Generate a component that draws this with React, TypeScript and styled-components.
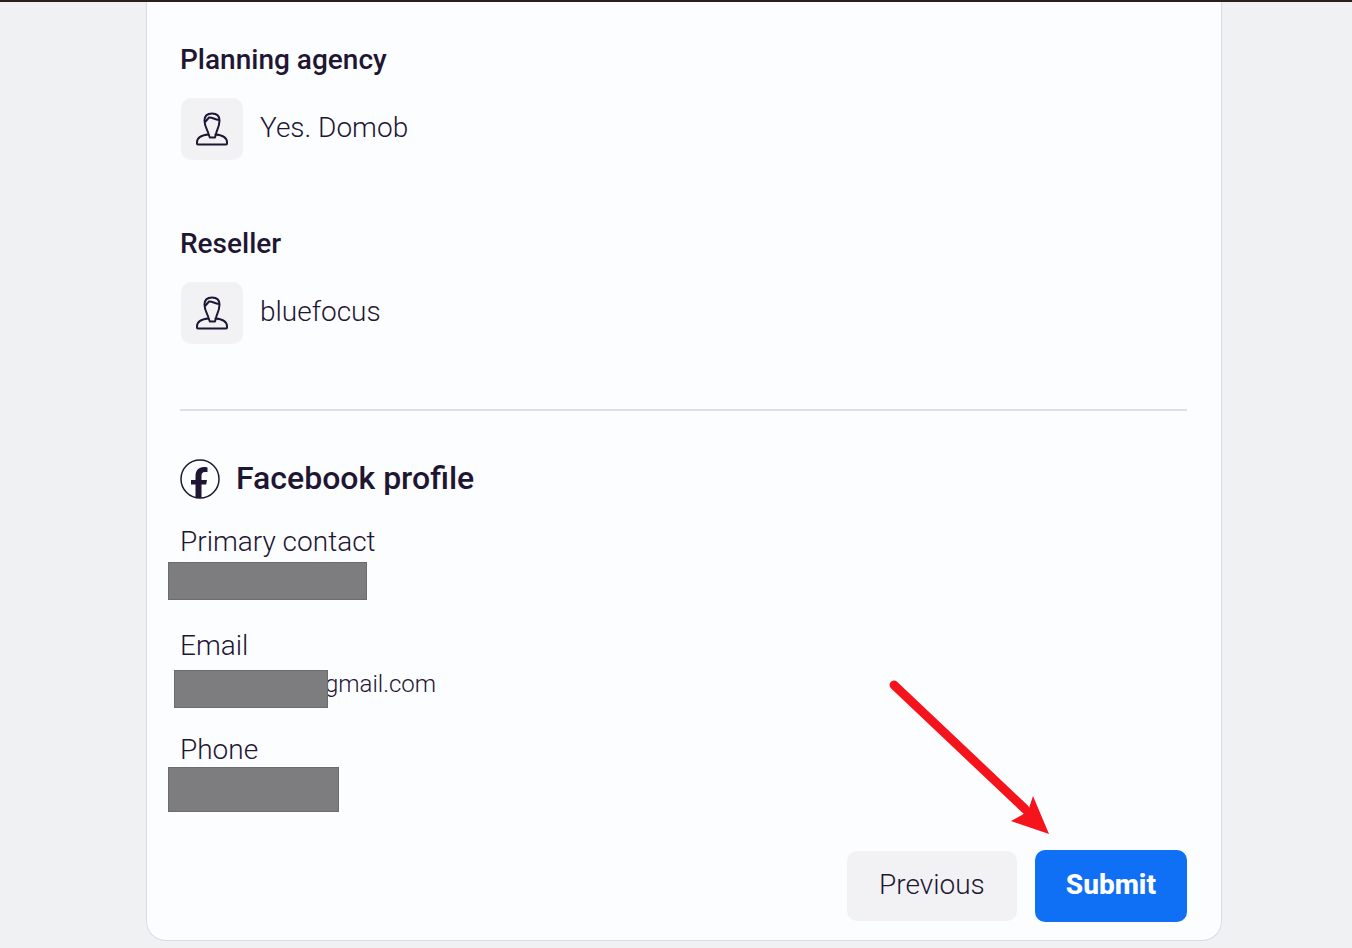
import React from "react";
import styled, { createGlobalStyle } from "styled-components";

const ink = "#1f1633";

const GlobalStyle = createGlobalStyle`
  *, *::before, *::after { box-sizing: border-box; }
  body {
    margin: 0;
    background: #f0f1f3;
    color: ${ink};
    font-family: Roboto, "Liberation Sans", sans-serif;
  }
  h2, h3, p, dl, dt, dd { margin: 0; font-weight: inherit; }
`;

const Page = styled.div`
  min-height: 100vh;
  border-top: 2px solid #2a201d;
  padding: 0 130px 8px 146px;
`;

const Card = styled.main`
  position: relative;
  padding: 40px 34px 18px 33px;
  background: #fcfdff;
  border: 1px solid #d9dee6;
  border-top: 0;
  border-radius: 0 0 20px 20px;
`;

const Parties = styled.div`
  display: grid;
  gap: 66px;
`;

const PartyTitle = styled.h3`
  margin-bottom: 20px;
  font-size: 28px;
  line-height: 36px;
  font-weight: 500;
`;

const PartyRow = styled.div`
  display: flex;
  gap: 17px;
  padding-left: 1px;
`;

const Tile = styled.span`
  display: grid;
  place-items: center;
  width: 62px;
  height: 62px;
  border-radius: 10px;
  background: #f2f2f5;
`;

const PartyName = styled.p`
  font-size: 28px;
  line-height: 60px;
  font-weight: 300;
`;

const Divider = styled.hr`
  height: 2px;
  margin: 65px 0 48px;
  border: 0;
  background: #d9e0ea;
`;

const ProfileHeading = styled.h2`
  display: flex;
  gap: 16px;
  margin-bottom: 27px;
  font-size: 32px;
  line-height: 38px;
  font-weight: 500;
`;

const Fields = styled.dl`
  display: grid;
  gap: 26px;
`;

const Label = styled.dt`
  font-size: 28px;
  line-height: 32px;
  font-weight: 300;
`;

const Value = styled.dd`
  display: flex;
  align-items: center;
  height: 46px;
  font-size: 24px;
  line-height: 32px;
  font-weight: 300;
`;

const Redaction = styled.span<{ $width: number; $height: number; $outset: number }>`
  position: relative;
  width: ${(p) => p.$width}px;
  height: ${(p) => p.$height}px;
  margin-left: -${(p) => p.$outset}px;
  background: #7d7d80;
  border: 1px solid #6c6c6f;
`;

const EmailValue = styled(Value)`
  align-items: flex-end;
`;

const EmailDomain = styled.span`
  margin: 0 0 8px -3px;
`;

const Actions = styled.div`
  position: relative;
  display: flex;
  justify-content: flex-end;
  align-items: center;
  gap: 18px;
  margin-top: 38px;
`;

const Button = styled.button<{ $primary?: boolean }>`
  height: ${(p) => (p.$primary ? 72 : 70)}px;
  padding: 0 ${(p) => (p.$primary ? 31 : 32)}px 2px;
  border: 0;
  border-radius: 10px;
  background: ${(p) => (p.$primary ? "#0f6ff5" : "#f2f2f5")};
  color: ${(p) => (p.$primary ? "#ffffff" : ink)};
  font-family: inherit;
  font-size: 28px;
  line-height: 36px;
  font-weight: ${(p) => (p.$primary ? 800 : 300)};
  cursor: pointer;
`;

const Pointer = styled.svg`
  position: absolute;
  right: 134px;
  bottom: 84px;
  pointer-events: none;
`;

function PersonIcon() {
  return (
    <svg width="34" height="36" viewBox="0 0 34 36" fill="none" stroke={ink} strokeWidth="2" strokeLinejoin="round" strokeLinecap="round" aria-hidden="true">
      <path d="M13.500 23C13 19.500 9.500 16 9.500 9.500C9.500 5 12 2.500 17 2.500S24.500 5 24.500 9.500C24.500 16 21.500 19.500 21 23L20 26.500H14.800Z" />
      <path d="M10.500 10.500L14 6.500C17 6 19.500 8.500 24 9" />
      <path d="M13.500 23.500C7 24 2 26 2 31.500V32.500Q2 33.500 3 33.500H31Q32 33.500 32 32.500V31.500C32 26 27.500 24 20.500 23.500" />
    </svg>
  );
}

function FacebookIcon() {
  return (
    <svg width="40" height="40" viewBox="0 0 40 40" aria-hidden="true">
      <circle cx="20" cy="20" r="19" fill="none" stroke={ink} strokeWidth="1.500" />
      <path
        fill={ink}
        d="M15.500 39V25.500H11V21H15.500V17.500C15.500 11.500 18.500 8 24 8C26 8 27.500 8.500 27.500 8.500V13H25C22.500 13 21.500 14.500 21.500 17V21H27L26.200 25.500H21.500V39Z"
      />
    </svg>
  );
}

const parties = [
  { title: "Planning agency", name: "Yes. Domob" },
  { title: "Reseller", name: "bluefocus" },
];

export default function App() {
  return (
    <>
      <GlobalStyle />
      <Page>
        <Card>
          <Parties>
            {parties.map((party) => (
              <section key={party.title}>
                <PartyTitle>{party.title}</PartyTitle>
                <PartyRow>
                  <Tile>
                    <PersonIcon />
                  </Tile>
                  <PartyName>{party.name}</PartyName>
                </PartyRow>
              </section>
            ))}
          </Parties>
          <Divider />
          <ProfileHeading>
            <FacebookIcon />
            Facebook profile
          </ProfileHeading>
          <Fields>
            <div>
              <Label>Primary contact</Label>
              <Value>
                <Redaction $width={199} $height={38} $outset={12} />
              </Value>
            </div>
            <div>
              <Label>Email</Label>
              <EmailValue>
                <Redaction $width={154} $height={38} $outset={6} />
                <EmailDomain>gmail.com</EmailDomain>
              </EmailValue>
            </div>
            <div>
              <Label>Phone</Label>
              <Value>
                <Redaction $width={171} $height={45} $outset={12} />
              </Value>
            </div>
          </Fields>
          <Actions>
            <Button type="button">Previous</Button>
            <Button type="submit" $primary>
              Submit
            </Button>
            <Pointer width="170" height="166" viewBox="0 0 170 166" aria-hidden="true">
              <path d="M11 13L142 137" stroke="#f5141c" strokeWidth="9" strokeLinecap="round" />
              <path d="M150 124L166 162L128 149L139 143L146 136Z" fill="#f5141c" />
            </Pointer>
          </Actions>
        </Card>
      </Page>
    </>
  );
}
